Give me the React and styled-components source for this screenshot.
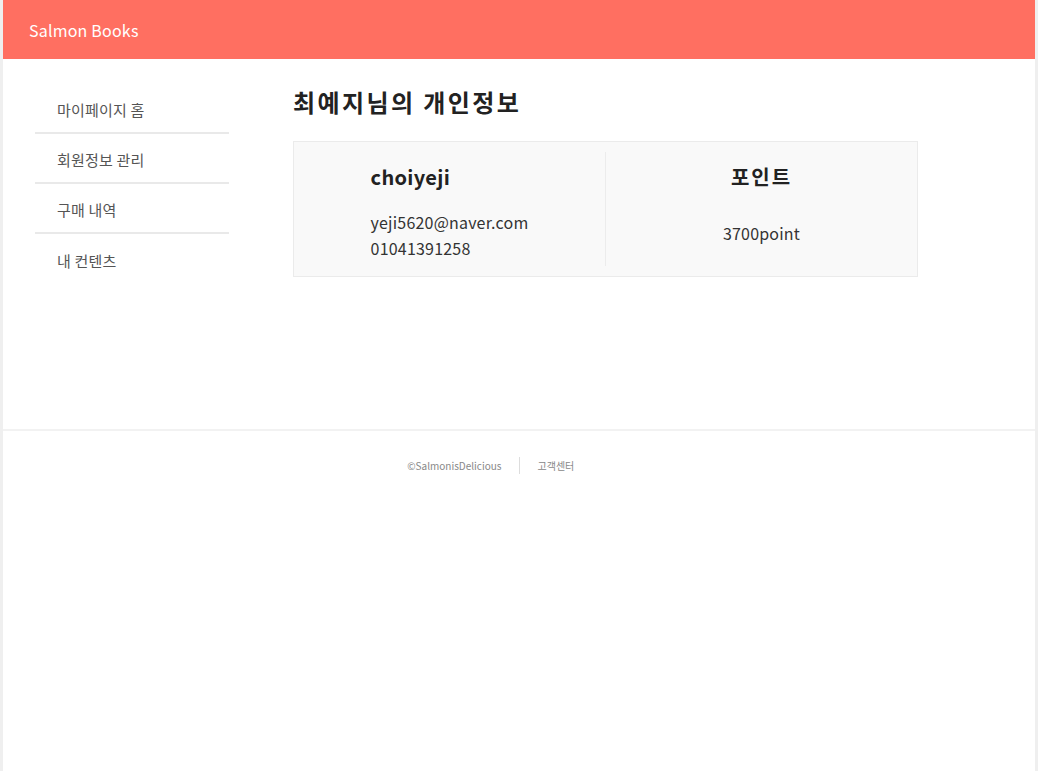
import React from 'react';
import styled, { createGlobalStyle } from 'styled-components';

const GlobalStyle = createGlobalStyle`
  html, body {
    margin: 0;
    padding: 0;
    background: #efefef;
  }

  body {
    font-family: "Noto Sans CJK KR", "Noto Sans", sans-serif;
    color: #333;
  }

  * {
    box-sizing: border-box;
  }
`;

const Page = styled.div`
  margin: 0 3px;
  min-height: 100vh;
  background: #fff;
`;

const Header = styled.header`
  display: flex;
  align-items: center;
  height: 59px;
  padding-left: 26px;
  background: #ff6f61;
  color: #fff;
  font-size: 16px;
  letter-spacing: 0.2px;
`;

const Body = styled.div`
  display: flex;
  height: 370px;
  padding: 25px 0 0 32px;
`;

const SideMenu = styled.ul`
  width: 194px;
  margin: 0;
  padding: 0;
  list-style: none;
`;

const SideItem = styled.li`
  display: flex;
  align-items: center;
  height: 50px;
  padding: 2px 0 0 22px;
  border-bottom: ${props => (props.last ? 'none' : '2px solid #e9e9e9')};
  color: #555;
  font-size: 15px;
  letter-spacing: 0.2px;
`;

const Main = styled.main`
  margin-left: 64px;
`;

const Title = styled.h2`
  margin: 1px 0 22px;
  font-size: 24px;
  line-height: 34px;
  font-weight: 600;
  letter-spacing: 2.4px;
  color: #222;
`;

const InfoCard = styled.div`
  display: flex;
  width: 625px;
  height: 136px;
  padding: 10px 0;
  background: #f9f9f9;
  border: 1px solid #ebebeb;
`;

const InfoColumn = styled.div`
  display: flex;
  flex: 1;
  flex-direction: column;
  align-items: center;
  padding-top: 10px;
  border-left: ${props => (props.divided ? '1px solid #ececec' : 'none')};
`;

const UserBlock = styled.div`
  display: flex;
  flex-direction: column;
`;

const ColumnTitle = styled.h3`
  margin: 0 0 ${props => props.gap}px;
  font-size: 20px;
  line-height: 30px;
  font-weight: 600;
  letter-spacing: ${props => (props.align === 'center' ? '2px' : '0.3px')};
  color: #222;
  text-align: ${props => props.align || 'left'};
`;

const InfoLine = styled.div`
  font-size: 16px;
  line-height: 26px;
  letter-spacing: 0.2px;
  color: #333;
  text-align: ${props => props.align || 'left'};
`;

const Footer = styled.footer`
  display: grid;
  grid-template-columns: 1fr auto 1fr;
  align-items: center;
  padding-top: 26px;
  border-top: 2px solid #f2f2f2;
  font-size: 10px;
  color: #888;
`;

const FooterText = styled.span`
  justify-self: ${props => props.side};
  padding: ${props => (props.side === 'end' ? '0 17px 0 0' : '0 0 0 18px')};
`;

const FooterDivider = styled.span`
  width: 1px;
  height: 17px;
  background: #ddd;
`;

const menu = ['마이페이지 홈', '회원정보 관리', '구매 내역', '내 컨텐츠'];

const App = () => {
  return (
    <Page>
      <GlobalStyle />
      <Header>Salmon Books</Header>
      <Body>
        <SideMenu>
          {menu.map((item, i) => (
            <SideItem key={item} last={i === menu.length - 1}>{item}</SideItem>
          ))}
        </SideMenu>
        <Main>
          <Title>최예지님의 개인정보</Title>
          <InfoCard>
            <InfoColumn>
              <UserBlock>
                <ColumnTitle gap={17}>choiyeji</ColumnTitle>
                <InfoLine>yeji5620@naver.com</InfoLine>
                <InfoLine>01041391258</InfoLine>
              </UserBlock>
            </InfoColumn>
            <InfoColumn divided>
              <ColumnTitle gap={28} align="center">포인트</ColumnTitle>
              <InfoLine align="center">3700point</InfoLine>
            </InfoColumn>
          </InfoCard>
        </Main>
      </Body>
      <Footer>
        <FooterText side="end">©SalmonisDelicious</FooterText>
        <FooterDivider />
        <FooterText side="start">고객센터</FooterText>
      </Footer>
    </Page>
  );
};

export default App;
